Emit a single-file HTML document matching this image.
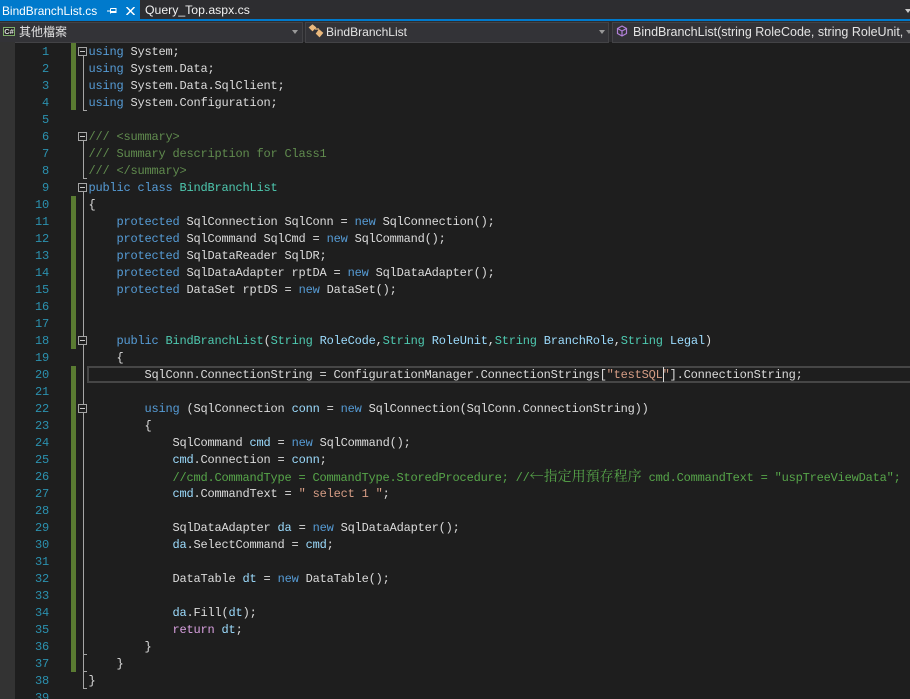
<!DOCTYPE html>
<html><head><meta charset="utf-8">
<style>
html,body{margin:0;padding:0;background:#1e1e1e;}
#r{position:relative;width:910px;height:699px;overflow:hidden;background:#1e1e1e;}
#r div{position:absolute;}
.l,.n{font-family:"Liberation Mono","Noto Serif CJK TC",monospace;font-size:12px;letter-spacing:-0.2px;line-height:17px;height:17px;white-space:pre;color:#dcdcdc;margin-top:1px;}
.l{left:88.5px;}
.n{left:15px;width:34px;text-align:right;color:#2b91af;}
.k{color:#569cd6}.t{color:#4ec9b0}.v{color:#9cdcfe}.s{color:#d69d85}.c{color:#57a64a}.d{color:#608b4e}.m{color:#d8a0df}
.z{font-family:"Noto Serif CJK TC",serif;font-size:14px;letter-spacing:0;line-height:14px;}
.u{font-family:"Liberation Sans","Noto Sans CJK TC",sans-serif;font-size:12.5px;line-height:20px;white-space:pre;color:#e4e4e4;}
.b{background:#5a7b32;left:71px;width:5px;}
.g{background:#a5a5a5;}
.x{left:78px;width:7px;height:7px;border:1px solid #a5a5a5;background:#1e1e1e;}
.x:after{content:"";position:absolute;left:1px;top:3px;width:5px;height:1px;background:#c8c8c8;}
.cb{background:#333337;border:1px solid #434346;top:22px;height:19px;box-sizing:content-box;}
.tr{width:0;height:0;border-left:3.5px solid transparent;border-right:3.5px solid transparent;border-top:4px solid #999;}
</style></head><body>
<div id="r">
<!-- top chrome -->
<div style="left:0;top:0;width:910px;height:42px;background:#2d2d30;"></div>
<div style="left:0;top:0;width:140px;height:19px;background:#007acc;"></div>
<div style="left:0;top:19px;width:910px;height:2px;background:#007acc;"></div>
<div class="u" style="left:2px;top:1px;color:#fff;font-size:11.9px;">BindBranchList.cs</div>
<svg style="position:absolute;left:107px;top:8px" width="10" height="6" viewBox="0 0 10 6"><path d="M0 3H3.500M3.500 0.500V5.500M3.500 0.500H9V4.500H3.500M3.500 3.500H9" fill="none" stroke="#fff" stroke-width="1"/></svg>
<svg style="position:absolute;left:126px;top:7px" width="9" height="8" viewBox="0 0 9 8"><path d="M0.500 0L8.500 8M8.500 0L0.500 8" fill="none" stroke="#fff" stroke-width="1.500"/></svg>
<div class="u" style="left:145px;top:0;color:#f1f1f1;font-size:12.25px;">Query_Top.aspx.cs</div>
<div class="tr" style="left:905px;top:9px;border-top-color:#ccc;"></div>
<!-- nav bar -->
<div class="cb" style="left:-1px;width:302px;"></div>
<div class="cb" style="left:305px;width:302px;"></div>
<div class="cb" style="left:612px;width:300px;"></div>
<div style="left:3px;top:27px;width:10px;height:7px;border:1px solid #7fae6a;background:#252526;color:#ddd;font:bold 7.5px/7px 'Liberation Sans',sans-serif;text-align:center;overflow:hidden;">C#</div>
<div class="u" style="left:19px;top:22px;font-size:12px;">其他檔案</div>
<div class="tr" style="left:292px;top:30px;"></div>
<svg style="position:absolute;left:308px;top:24px" width="16" height="14" viewBox="0 0 16 14"><path d="M1.500 3.500L4.500 1L7.500 3.500L4.500 6.500ZM7 5H11M11 6L14.500 9L11.500 12.500L8.500 9.500Z" fill="#eab87c" stroke="#eab87c" stroke-width="1.200"/></svg>
<div class="u" style="left:326px;top:22px;font-size:12.05px;">BindBranchList</div>
<div class="tr" style="left:599px;top:30px;"></div>
<svg style="position:absolute;left:616px;top:25px" width="12" height="12" viewBox="0 0 12 12"><path d="M6 1L10.500 3.500V8.500L6 11L1.500 8.500V3.500ZM1.500 3.500L6 6L10.500 3.500M6 6V11" fill="none" stroke="#b180d7" stroke-width="1.200"/></svg>
<div class="u" style="left:633px;top:22px;">BindBranchList(string RoleCode, string RoleUnit,</div>
<div class="tr" style="left:906px;top:30px;"></div>
<!-- margin -->
<div style="left:0;top:42px;width:15px;height:657px;background:#333333;"></div>
<!-- change bars -->
<div class="b" style="top:43px;height:67px;"></div>
<div class="b" style="top:196px;height:153px;"></div>
<div class="b" style="top:366px;height:306px;"></div>
<!-- outline -->
<div class="g" style="left:83px;top:52px;width:1px;height:58px;"></div>
<div class="g" style="left:83px;top:110px;width:4px;height:1px;"></div>
<div class="g" style="left:83px;top:137px;width:1px;height:41px;"></div>
<div class="g" style="left:83px;top:178px;width:4px;height:1px;"></div>
<div class="g" style="left:83px;top:188px;width:1px;height:500px;"></div>
<div class="g" style="left:83px;top:654px;width:4px;height:1px;"></div>
<div class="g" style="left:83px;top:671px;width:4px;height:1px;"></div>
<div class="g" style="left:83px;top:688px;width:4px;height:1px;"></div>
<div class="x" style="top:47px;"></div>
<div class="x" style="top:132px;"></div>
<div class="x" style="top:183px;"></div>
<div class="x" style="top:336px;"></div>
<div class="x" style="top:404px;"></div>
<!-- current line -->
<div style="left:87px;top:366px;width:830px;height:13px;border:2px solid #464646;"></div>
<!-- numbers -->
<div class="n" style="top:43px">1</div><div class="n" style="top:60px">2</div><div class="n" style="top:77px">3</div><div class="n" style="top:94px">4</div><div class="n" style="top:111px">5</div><div class="n" style="top:128px">6</div><div class="n" style="top:145px">7</div><div class="n" style="top:162px">8</div><div class="n" style="top:179px">9</div><div class="n" style="top:196px">10</div><div class="n" style="top:213px">11</div><div class="n" style="top:230px">12</div><div class="n" style="top:247px">13</div><div class="n" style="top:264px">14</div><div class="n" style="top:281px">15</div><div class="n" style="top:298px">16</div><div class="n" style="top:315px">17</div><div class="n" style="top:332px">18</div><div class="n" style="top:349px">19</div><div class="n" style="top:366px">20</div><div class="n" style="top:383px">21</div><div class="n" style="top:400px">22</div><div class="n" style="top:417px">23</div><div class="n" style="top:434px">24</div><div class="n" style="top:451px">25</div><div class="n" style="top:468px">26</div><div class="n" style="top:485px">27</div><div class="n" style="top:502px">28</div><div class="n" style="top:519px">29</div><div class="n" style="top:536px">30</div><div class="n" style="top:553px">31</div><div class="n" style="top:570px">32</div><div class="n" style="top:587px">33</div><div class="n" style="top:604px">34</div><div class="n" style="top:621px">35</div><div class="n" style="top:638px">36</div><div class="n" style="top:655px">37</div><div class="n" style="top:672px">38</div><div class="n" style="top:689px">39</div>
<!-- code -->
<div class="l" style="top:43px"><span class="k">using</span> System;</div>
<div class="l" style="top:60px"><span class="k">using</span> System.Data;</div>
<div class="l" style="top:77px"><span class="k">using</span> System.Data.SqlClient;</div>
<div class="l" style="top:94px"><span class="k">using</span> System.Configuration;</div>
<div class="l d" style="top:128px">/// &lt;summary&gt;</div>
<div class="l d" style="top:145px">/// Summary description for Class1</div>
<div class="l d" style="top:162px">/// &lt;/summary&gt;</div>
<div class="l" style="top:179px"><span class="k">public class</span> <span class="t">BindBranchList</span></div>
<div class="l" style="top:196px">{</div>
<div class="l" style="top:213px">    <span class="k">protected</span> SqlConnection SqlConn = <span class="k">new</span> SqlConnection();</div>
<div class="l" style="top:230px">    <span class="k">protected</span> SqlCommand SqlCmd = <span class="k">new</span> SqlCommand();</div>
<div class="l" style="top:247px">    <span class="k">protected</span> SqlDataReader SqlDR;</div>
<div class="l" style="top:264px">    <span class="k">protected</span> SqlDataAdapter rptDA = <span class="k">new</span> SqlDataAdapter();</div>
<div class="l" style="top:281px">    <span class="k">protected</span> DataSet rptDS = <span class="k">new</span> DataSet();</div>
<div class="l" style="top:332px">    <span class="k">public</span> <span class="t">BindBranchList</span>(<span class="t">String</span> <span class="v">RoleCode</span>,<span class="t">String</span> <span class="v">RoleUnit</span>,<span class="t">String</span> <span class="v">BranchRole</span>,<span class="t">String</span> <span class="v">Legal</span>)</div>
<div class="l" style="top:349px">    {</div>
<div class="l" style="top:366px">        SqlConn.ConnectionString = ConfigurationManager.ConnectionStrings[<span class="s">"testSQL"</span>].ConnectionString;</div>
<div class="l" style="top:400px">        <span class="k">using</span> (SqlConnection <span class="v">conn</span> = <span class="k">new</span> SqlConnection(SqlConn.ConnectionString))</div>
<div class="l" style="top:417px">        {</div>
<div class="l" style="top:434px">            SqlCommand <span class="v">cmd</span> = <span class="k">new</span> SqlCommand();</div>
<div class="l" style="top:451px">            <span class="v">cmd</span>.Connection = <span class="v">conn</span>;</div>
<div class="l c" style="top:468px">            //cmd.CommandType = CommandType.StoredProcedure; //<span class="z">←指定用預存程序</span> cmd.CommandText = "uspTreeViewData";</div>
<div class="l" style="top:485px">            <span class="v">cmd</span>.CommandText = <span class="s">" select 1 "</span>;</div>
<div class="l" style="top:519px">            SqlDataAdapter <span class="v">da</span> = <span class="k">new</span> SqlDataAdapter();</div>
<div class="l" style="top:536px">            <span class="v">da</span>.SelectCommand = <span class="v">cmd</span>;</div>
<div class="l" style="top:570px">            DataTable <span class="v">dt</span> = <span class="k">new</span> DataTable();</div>
<div class="l" style="top:604px">            <span class="v">da</span>.Fill(<span class="v">dt</span>);</div>
<div class="l" style="top:621px">            <span class="m">return</span> <span class="v">dt</span>;</div>
<div class="l" style="top:638px">        }</div>
<div class="l" style="top:655px">    }</div>
<div class="l" style="top:672px">}</div>
<!-- caret -->
<div style="left:663px;top:367px;width:1px;height:15px;background:#dcdcdc;"></div>
</div>
</body></html>
